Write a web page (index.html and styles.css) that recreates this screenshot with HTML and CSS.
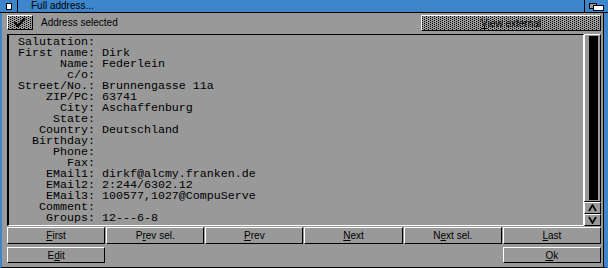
FILE: index.html
```html
<!DOCTYPE html>
<html lang="en">
<head>
    <meta charset="UTF-8">
    <title>Full address...</title>
    <link rel="stylesheet" href="styles.css">
</head>
<body>
    <div class="window">
        <div class="titlebar">
            <div class="close-gadget"><span class="close-box"></span></div>
            <div class="title">Full address...</div>
            <div class="depth-gadget">
                <svg width="23" height="12" viewBox="0 0 23 12">
                    <rect x="4.5" y="3.5" width="7" height="5" fill="#999" stroke="#000"/>
                    <rect x="8.5" y="5.5" width="10" height="5" fill="#fff" stroke="#000"/>
                </svg>
            </div>
        </div>

        <div class="frame">
            <div class="top-row">
                <span class="checkbox ghost">
                    <svg width="24" height="13" viewBox="0 0 24 13">
                        <polyline points="6,6 10,10 17,2" fill="none" stroke="#000" stroke-width="2.2"/>
                    </svg>
                </span>
                <span class="check-label">Address selected</span>
                <span class="btn btn-ext ghost"><u>V</u>iew external</span>
            </div>

            <div class="list-row">
                <div class="listview">
                    <div class="entry"><span class="label">Salutation:</span><span class="value"></span></div>
                    <div class="entry"><span class="label">First name:</span><span class="value">Dirk</span></div>
                    <div class="entry"><span class="label">Name:</span><span class="value">Federlein</span></div>
                    <div class="entry"><span class="label">c/o:</span><span class="value"></span></div>
                    <div class="entry"><span class="label">Street/No.:</span><span class="value">Brunnengasse 11a</span></div>
                    <div class="entry"><span class="label">ZIP/PC:</span><span class="value">63741</span></div>
                    <div class="entry"><span class="label">City:</span><span class="value">Aschaffenburg</span></div>
                    <div class="entry"><span class="label">State:</span><span class="value"></span></div>
                    <div class="entry"><span class="label">Country:</span><span class="value">Deutschland</span></div>
                    <div class="entry"><span class="label">Birthday:</span><span class="value"></span></div>
                    <div class="entry"><span class="label">Phone:</span><span class="value"></span></div>
                    <div class="entry"><span class="label">Fax:</span><span class="value"></span></div>
                    <div class="entry"><span class="label">EMail1:</span><span class="value">dirkf@alcmy.franken.de</span></div>
                    <div class="entry"><span class="label">EMail2:</span><span class="value">2:244/6302.12</span></div>
                    <div class="entry"><span class="label">EMail3:</span><span class="value">100577,1027@CompuServe</span></div>
                    <div class="entry"><span class="label">Comment:</span><span class="value"></span></div>
                    <div class="entry"><span class="label">Groups:</span><span class="value">12---6-8</span></div>
                </div>
                <div class="scroller">
                    <div class="prop"><div class="knob"></div></div>
                    <div class="arrow">
                        <svg width="13" height="8" viewBox="0 0 13 8"><polyline points="3,7 6.5,1 10,7" fill="none" stroke="#000" stroke-width="1.6"/></svg>
                    </div>
                    <div class="arrow">
                        <svg width="13" height="8" viewBox="0 0 13 8"><polyline points="3,1 6.5,7 10,1" fill="none" stroke="#000" stroke-width="1.6"/></svg>
                    </div>
                </div>
            </div>

            <div class="nav-row">
                <span class="btn"><u>F</u>irst</span>
                <span class="btn">P<u>r</u>ev sel.</span>
                <span class="btn"><u>P</u>rev</span>
                <span class="btn"><u>N</u>ext</span>
                <span class="btn">N<u>e</u>xt sel.</span>
                <span class="btn"><u>L</u>ast</span>
            </div>

            <div class="bottom-row">
                <span class="btn">E<u>d</u>it</span>
                <span class="btn btn-ok"><u>O</u>k</span>
            </div>
        </div>
    </div>
</body>
</html>
```

FILE: styles.css
```css
* {
    margin: 0;
    padding: 0;
    box-sizing: border-box;
}

body {
    font-family: "Liberation Sans", Arial, sans-serif;
    font-size: 10px;
    color: #000;
    background: #999;
}

.window {
    width: 608px;
    height: 268px;
    display: flex;
    flex-direction: column;
    background: #999;
}

/* Title bar */
.titlebar {
    height: 13px;
    display: flex;
    background: #3d86cc;
    border-bottom: 1px solid #000;
}

.close-gadget {
    width: 18px;
    border-right: 1px solid #000;
}

.close-box {
    display: block;
    width: 6px;
    height: 7px;
    margin: 3px 0 0 6px;
    background: #fff;
    border: 1px solid #000;
}

.title {
    padding-left: 13px;
    line-height: 12px;
}

.depth-gadget {
    margin-left: auto;
    width: 24px;
    border-left: 1px solid #000;
}

.depth-gadget svg {
    display: block;
}

/* Window content */
.frame {
    flex: 1;
    display: flex;
    flex-direction: column;
    border-left: 2px solid #3d86cc;
    border-right: 4px solid #3d86cc;
    border-bottom: 1px solid #000;
    padding: 2px 3px 0 5px;
    box-shadow: inset -1px 0 #000;
}

/* disabled look: one dot in four, rows shifted */
.ghost {
    background-color: #999;
    background-image:
        conic-gradient(from 270deg at 1px 1px, #000 25%, transparent 0),
        conic-gradient(from 270deg at 1px 1px, #000 25%, transparent 0);
    background-size: 4px 2px;
    background-position: 0 0, 2px 1px;
}

.top-row {
    display: flex;
    align-items: flex-start;
    height: 16px;
}

.checkbox {
    width: 26px;
    height: 15px;
    border-top: 1px solid #fff;
    border-left: 1px solid #fff;
    border-right: 1px solid #000;
    border-bottom: 1px solid #000;
}

.checkbox svg {
    display: block;
}

.check-label {
    margin-left: 8px;
    line-height: 15px;
}

.btn {
    display: flex;
    align-items: center;
    justify-content: center;
    background-color: #999;
    border-top: 1px solid #fff;
    border-left: 1px solid #fff;
    border-right: 1px solid #000;
    border-bottom: 1px solid #000;
}

.btn u {
    text-decoration-thickness: 1px;
    text-underline-offset: 1px;
}

.btn-ext {
    margin-left: auto;
    width: 180px;
    height: 16px;
}

/* List view */
.list-row {
    display: flex;
    height: 192px;
    margin-top: 3px;
}

.listview {
    flex: 1;
    border-top: 1px solid #000;
    border-left: 2px solid #000;
    border-bottom: 1px solid #fff;
    border-right: 1px solid #fff;
    padding: 2px 0 0 9px;
    font-family: "Liberation Mono", monospace;
    font-size: 11.67px;
    line-height: 11px;
    overflow: hidden;
}

.entry {
    display: grid;
    grid-template-columns: 11ch auto;
    column-gap: 1ch;
    white-space: pre;
}

.label {
    text-align: right;
}

.scroller {
    width: 17px;
    display: flex;
    flex-direction: column;
}

.prop {
    flex: 1;
    border-top: 1px solid #fff;
    border-left: 1px solid #fff;
    border-right: 1px solid #000;
    border-bottom: 1px solid #000;
    padding: 1px 2px 1px 4px;
}

.knob {
    height: 100%;
    width: 9px;
    background: #000;
}

.arrow {
    height: 12px;
    display: flex;
    align-items: center;
    justify-content: center;
    border-top: 1px solid #fff;
    border-left: 1px solid #fff;
    border-right: 1px solid #000;
    border-bottom: 1px solid #000;
}

.arrow svg {
    display: block;
}

/* Button rows */
.nav-row,
.bottom-row {
    display: grid;
    grid-template-columns: repeat(6, 1fr);
    column-gap: 1px;
}

.nav-row {
    height: 17px;
    margin-top: 1px;
}

.bottom-row {
    height: 16px;
    margin-top: 3px;
}

.btn-ok {
    grid-column: 6;
}
```
